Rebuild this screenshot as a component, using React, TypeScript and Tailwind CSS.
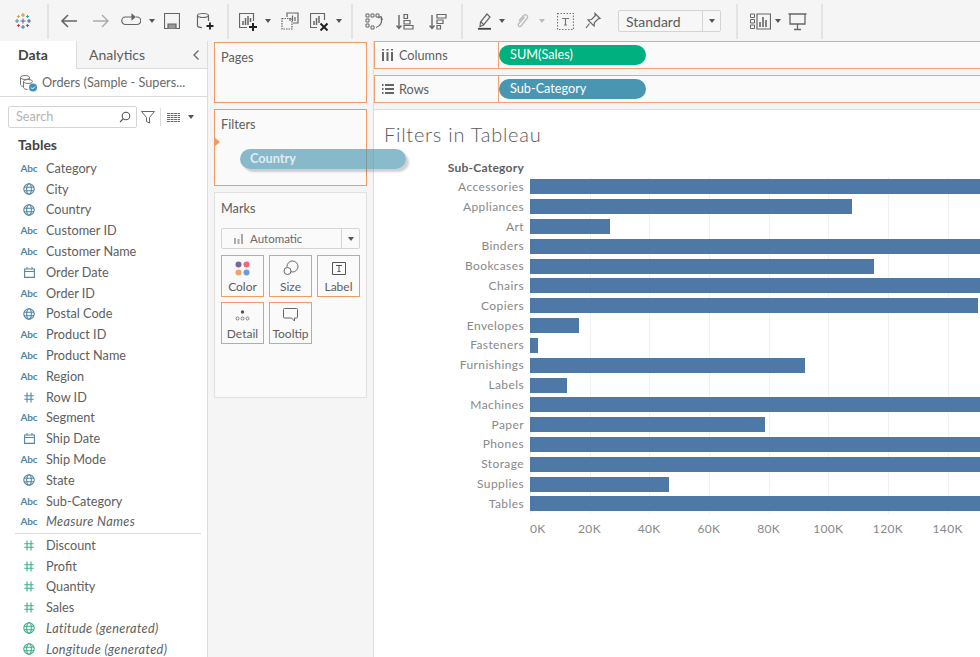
import React from "react";

type IconProps = { className?: string };

const S = ({ className, w = 18, h = 18, vb = "0 0 18 18", children, stroke = "#666" }: { className?: string; w?: number; h?: number; vb?: string; children: React.ReactNode; stroke?: string }) => (
  <svg width={w} height={h} viewBox={vb} fill="none" stroke={stroke} strokeWidth={1.2} className={`shrink-0 ${className ?? ""}`}>
    {children}
  </svg>
);

const Caret = ({ className, color = "#555" }: { className?: string; color?: string }) => (
  <svg width={6} height={4} viewBox="0 0 6 4" className={`shrink-0 ${className ?? ""}`}><path d="M0 0h6L3 4z" fill={color} /></svg>
);

const Sep = ({ className }: IconProps) => <div className={`w-[2px] h-[35px] bg-[#e3e3e3] shrink-0 ${className ?? ""}`} />;

const Logo = ({ className }: IconProps) => {
  const plus = (x: number, y: number, r: number, c: string) => (
    <path key={`${x}-${y}`} d={`M${x - r} ${y}h${2 * r}M${x} ${y - r}v${2 * r}`} stroke={c} strokeWidth={1.1} />
  );
  return (
    <svg width={18} height={18} viewBox="0 0 18 18" fill="none" className={`shrink-0 ${className ?? ""}`}>
      {plus(9, 9, 2.6, "#5b6f9a")}
      {plus(9, 3, 2, "#e8883a")}
      {plus(9, 15, 2, "#4a77a8")}
      {plus(3, 9, 2, "#3d9aa8")}
      {plus(15, 9, 2, "#5b5f97")}
      {plus(4.5, 4.5, 1.6, "#d9a53c")}
      {plus(13.5, 4.5, 1.6, "#3f9f9a")}
      {plus(4.5, 13.5, 1.6, "#d8404f")}
      {plus(13.5, 13.5, 1.6, "#4d6fa8")}
    </svg>
  );
};

const Toolbar = () => (
  <div className="h-[41px] bg-[#f5f5f5] flex items-center shrink-0 pt-[1px]">
    <Logo className="ml-[14px]" />
    <Sep className="ml-[15px]" />
    <S className="ml-[11px]"><path d="M17 9H2M8 3L2 9l6 6" strokeWidth={1.6} /></S>
    <S className="ml-[14px]" stroke="#aaa"><path d="M1 9h15M10 3l6 6-6 6" strokeWidth={1.4} /></S>
    <S className="ml-[11px]" w={20} vb="0 0 20 18"><path d="M11 5H4.500a3 3 0 000 7.500H16a3 3 0 000-7.500h-1" /><path d="M11 2.500L14 5l-3 2.500z" fill="#666" /></S>
    <Caret className="ml-[8px]" />
    <S className="ml-[9px]" w={16} vb="0 0 16 18"><path d="M.5 1.500h15v15H.5z" /><path d="M4 16.500V12h8v4.500" fill="#999" /></S>
    <S className="ml-[16px]"><ellipse cx="7" cy="3.500" rx="5.500" ry="2" /><path d="M1.500 3.500v10c0 1.200 2 2 4.500 2M12.500 3.500V9" /><path d="M14 10.500v7M10.500 14h7" stroke="#222" strokeWidth={1.8} /></S>
    <Sep className="ml-[13px]" />
    <S className="ml-[10px]" w={19} h={19} vb="0 0 19 19"><path d="M14.500 9V1.500h-14v14H8" /><path d="M4 13V9M6.500 13V6M9 13V4M11.500 10V6" strokeWidth={1.5} /><path d="M14 11v8M10 15h8" stroke="#222" strokeWidth={2} /></S>
    <Caret className="ml-[7px]" />
    <S className="ml-[10px]"><path d="M6 5V1h11v10h-5" /><path d="M1 6.500h10V17H1z" strokeDasharray="1.500 1" /><path d="M9 9V6M11.500 9V3.500M14 9V5" /></S>
    <S className="ml-[11px]" w={19} h={19} vb="0 0 19 19"><path d="M14.500 8V1.500h-14v14H7" /><path d="M4 13V9M6.500 13V6M9 11V4" strokeWidth={1.5} /><path d="M10.500 11.500l7 7M17.500 11.500l-7 7" stroke="#222" strokeWidth={2} /></S>
    <Caret className="ml-[7px]" />
    <Sep className="ml-[9px]" />
    <S className="ml-[12px]"><path d="M1 2h3v3H1zM6 2h3v3H6zM11 2h3v3h-3zM1 7h3v3H1zM1 12h3v3H1zM6 14h3v3H6z" strokeWidth={1} /><path d="M16 6c1.500 4-.5 8-5 9.500M13 6l3-1.500L17.500 8" /></S>
    <S className="ml-[13px]"><path d="M3 3v13M.5 13.500L3 16.500l2.500-3" strokeWidth={1.4} /><path d="M8 2.500h3.500v4H8zM8 8.500h6v3.500H8zM8 13.500h9v3.500H8z" /></S>
    <S className="ml-[15px]"><path d="M3 3v13M.5 13.500L3 16.500l2.500-3" strokeWidth={1.4} /><path d="M8 2.500h9V6H8zM8 8h6v3.500H8zM8 13.500h3.500V17H8z" /></S>
    <Sep className="ml-[14px]" />
    <S className="ml-[13px]"><path d="M11 2l3 3-6.500 8-3.500 1.500L4.500 10z" /><path d="M5 10l3 3" /><path d="M2 16.800h13" stroke="#444" strokeWidth={1.8} /></S>
    <Caret className="ml-[5px]" />
    <S className="ml-[9px]" stroke="#bbb"><path d="M5 9l5-6a2.500 2.500 0 013.500 3l-6.500 8a1.500 1.500 0 01-2.500-2l6-7" strokeWidth={1.3} /></S>
    <Caret className="ml-[7px]" color="#bbb" />
    <S className="ml-[12px]" w={17} h={17} vb="0 0 17 17" stroke="#777"><path d="M.5.500h16v16H.5z" strokeDasharray="1.500 1.500" /><path d="M5 5.500h7M8.500 5.500V12M7 12h3" /></S>
    <S className="ml-[10px]"><path d="M11 1.500l5 5-2 .5-3.500 3.500-.5 3.500-6-6 3.500-.5L11 4z" /><path d="M5.500 11.500L2 16" /></S>
    <div className="ml-[16px] w-[103px] h-[22px] border border-[#d4d4d4] rounded-[2px] flex items-center shrink-0 bg-[#f7f7f7]">
      <span className="pl-[7px] flex-1 text-[14px] text-[#5c5c5c]">Standard</span>
      <div className="w-[18px] h-full border-l border-[#d4d4d4] flex items-center justify-center"><Caret color="#555" /></div>
    </div>
    <Sep className="ml-[15px]" />
    <S className="ml-[12px]" w={21} h={17} vb="0 0 21 17" ><path d="M.5 1h4v3.500h-4zM.5 6.500h4V10h-4zM.5 12h4v3.500h-4z" strokeWidth={1} /><path d="M7 1h13.500v15H7z" /><path d="M10 14V9M13 14V4M16 14V7" strokeWidth={1.6} /></S>
    <Caret className="ml-[4px]" />
    <S className="ml-[7px]" w={19} h={19} vb="0 0 19 19"><path d="M.5 2h18M2 2v10h15V2M9.500 12v5M6 17.500h7" strokeWidth={1.3} /></S>
    <Sep className="ml-[14px]" />
  </div>
);

const Abc = () => <span className="text-[10px] font-bold text-[#4f86a3] tracking-[-0.2px]">Abc</span>;
const Globe = ({ color }: { color: string }) => (
  <svg width={12} height={12} viewBox="0 0 12 12" fill="none" stroke={color} strokeWidth={1.1}>
    <circle cx="6" cy="6" r="5.200" />
    <ellipse cx="6" cy="6" rx="2.300" ry="5.200" />
    <path d="M1 4.200h10M1 7.800h10" />
  </svg>
);
const Cal = () => (
  <svg width={11} height={11} viewBox="0 0 11 11" fill="none" stroke="#4f86a3" strokeWidth={1.1}>
    <path d="M.6 2h9.800v8.400H.6zM.6 4.500h9.800M3 0v2.500M8 0v2.500" />
  </svg>
);
const Hash = ({ color }: { color: string }) => (
  <svg width={10} height={11} viewBox="0 0 10 11" fill="none" stroke={color} strokeWidth={1.1}>
    <path d="M3 .5v10M7 .5v10M.3 3.700h9.400M.3 7.300h9.400" />
  </svg>
);

type Field = [string, React.ReactNode, boolean?];
const dims: Field[] = [
  ["Category", <Abc />], ["City", <Globe color="#4f86a3" />], ["Country", <Globe color="#4f86a3" />],
  ["Customer ID", <Abc />], ["Customer Name", <Abc />], ["Order Date", <Cal />], ["Order ID", <Abc />],
  ["Postal Code", <Globe color="#4f86a3" />], ["Product ID", <Abc />], ["Product Name", <Abc />],
  ["Region", <Abc />], ["Row ID", <Hash color="#4f86a3" />], ["Segment", <Abc />], ["Ship Date", <Cal />],
  ["Ship Mode", <Abc />], ["State", <Globe color="#4f86a3" />], ["Sub-Category", <Abc />], ["Measure Names", <Abc />, true],
];
const meas: Field[] = [
  ["Discount", <Hash color="#3fae85" />], ["Profit", <Hash color="#3fae85" />], ["Quantity", <Hash color="#3fae85" />],
  ["Sales", <Hash color="#3fae85" />], ["Latitude (generated)", <Globe color="#3fae85" />, true], ["Longitude (generated)", <Globe color="#3fae85" />, true],
];

const FieldRow = ({ f }: { f: Field }) => (
  <div className="h-[20.8px] flex items-center shrink-0">
    <div className="w-[46px] pl-[20px] pr-[8px] flex justify-center shrink-0">{f[1]}</div>
    <span className={`text-[12.7px] text-[#5e5e5e] whitespace-nowrap ${f[2] ? "italic tracking-[0.35px]" : ""}`}>{f[0]}</span>
  </div>
);

const DataPane = () => (
  <div className="w-[208px] shrink-0 border-r border-[#dcdcdc] flex flex-col overflow-hidden bg-white">
    <div className="h-[28px] flex shrink-0">
      <div className="w-[76px] pl-[18px] pt-[3px] text-[14px] font-bold text-[#444]">Data</div>
      <div className="flex-1 bg-[#f5f5f5] border-l border-b border-[#dcdcdc] flex items-center justify-between pl-[12px] pr-[7px]">
        <span className="text-[14px] text-[#5c5c5c]">Analytics</span>
        <svg width={8} height={12} viewBox="0 0 8 12" fill="none" stroke="#666" strokeWidth={1.3}><path d="M6.500 1.500L2 6l4.500 4.500" /></svg>
      </div>
    </div>
    <div className="h-[28px] border-b border-[#dcdcdc] flex items-center pl-[19px] shrink-0">
      <svg width={19} height={18} viewBox="0 0 19 18" fill="none" stroke="#777" strokeWidth={1}>
        <ellipse cx="6" cy="3.500" rx="4.500" ry="2" />
        <path d="M1.500 3.500v7c0 1 1.500 1.800 3 2M10.500 3.500v3" />
        <ellipse cx="9" cy="7.500" rx="4.500" ry="2" fill="#fff" />
        <path d="M4.500 7.500v6c0 1 2 2 4 2" />
        <circle cx="14" cy="13.500" r="4" fill="#3f8fc0" stroke="none" />
        <path d="M12 13.500l1.500 1.500 2.500-2.500" stroke="#fff" />
      </svg>
      <span className="ml-[4px] text-[12.7px] text-[#6a6a6a] whitespace-nowrap">Orders (Sample - Supers...</span>
    </div>
    <div className="flex items-center pl-[8px] pt-[9px] shrink-0">
      <div className="w-[129px] h-[22px] border border-[#d4d4d4] rounded-[2px] flex items-center justify-between pl-[7px] pr-[5px]">
        <span className="text-[12.7px] text-[#b4b4b4]">Search</span>
        <svg width={12} height={12} viewBox="0 0 12 12" fill="none" stroke="#555" strokeWidth={1.1}><circle cx="7" cy="5" r="3.800" /><path d="M4.300 7.700L1 11" /></svg>
      </div>
      <svg width={14} height={13} viewBox="0 0 14 13" fill="none" stroke="#666" strokeWidth={1} className="ml-[4px]"><path d="M.5.500h13L8.500 6.500V12l-3-1.500v-4z" /></svg>
      <div className="w-[1px] h-[18px] bg-[#ddd] ml-[5px]" />
      <svg width={13} height={9} viewBox="0 0 13 9" stroke="#666" strokeWidth={1} className="ml-[6px]"><path d="M0 .5h13M0 2.500h13M0 4.500h13M0 6.500h13M0 8.500h13" strokeDasharray="3 .6" /></svg>
      <Caret className="ml-[8px]" />
    </div>
    <div className="pl-[18px] pt-[6px] h-[30px] text-[14px] font-bold text-[#444] shrink-0">Tables</div>
    <div className="flex flex-col shrink-0">
      {dims.map((f) => <FieldRow key={f[0]} f={f} />)}
    </div>
    <div className="ml-[15px] mr-[6px] border-t border-[#dcdcdc] mt-[0.5px] pt-[1px] flex flex-col">
      {meas.map((f) => <div key={f[0]} className="-ml-[15px]"><FieldRow f={f} /></div>)}
    </div>
  </div>
);

const CardTitle = ({ children, className }: { children: React.ReactNode; className?: string }) => (
  <div className={`text-[12.7px] text-[#5e5e5e] pl-[6px] leading-[18px] ${className ?? "pt-[5px]"}`}>{children}</div>
);

const MarkBtn = ({ label, children }: { label: string; children: React.ReactNode }) => (
  <div className="h-[42px] border border-[#f19a63] flex flex-col items-center justify-end pb-[1px] bg-[#fafafa]">
    <div className="h-[20px] flex items-center justify-center">{children}</div>
    <span className="text-[12px] leading-[17px] text-[#5e5e5e]">{label}</span>
  </div>
);

const Shelves = () => (
  <div className="w-[165px] shrink-0 bg-[#f5f5f5] flex flex-col pl-[6px] pr-[6px] pt-[1px]">
    <div className="h-[61px] border border-[#f19a63] bg-[#fafafa] shrink-0"><CardTitle>Pages</CardTitle></div>
    <div className="h-[77px] mt-[6px] border border-[#f19a63] bg-[#fafafa] shrink-0 relative">
      <CardTitle>Filters</CardTitle>
      <div className="absolute -left-[1px] top-[27px] w-0 h-0 border-y-[5px] border-y-transparent border-l-[6px] border-l-[#f19a63]" />
    </div>
    <div className="h-[206px] mt-[6px] border border-[#e0e0e0] bg-[#fafafa] shrink-0">
      <CardTitle className="pt-[6px]">Marks</CardTitle>
      <div className="mx-[6px] mt-[11px] h-[21px] border border-[#d4d4d4] rounded-[2px] flex items-center">
        <svg width={10} height={10} viewBox="0 0 10 10" className="ml-[12px]" fill="#aaa"><path d="M0 4h2v6H0zM3.500 5h2v5h-2zM7 0h2v10H7z" /></svg>
        <span className="ml-[6px] flex-1 text-[11.500px] text-[#6a6a6a]">Automatic</span>
        <div className="w-[18px] h-full border-l border-[#d4d4d4] flex items-center justify-center"><Caret /></div>
      </div>
      <div className="mx-[6px] mt-[6px] grid grid-cols-[43px_43px_43px] gap-x-[5px] gap-y-[5px]">
        <MarkBtn label="Color">
          <svg width={15} height={15} viewBox="0 0 15 15"><circle cx="3.500" cy="3.500" r="3" fill="#7b6595" /><circle cx="11.500" cy="3.500" r="3" fill="#e96a7c" /><circle cx="3.500" cy="11.500" r="3" fill="#f0a36a" /><circle cx="11.500" cy="11.500" r="3" fill="#6f9bd1" /></svg>
        </MarkBtn>
        <MarkBtn label="Size">
          <svg width={16} height={16} viewBox="0 0 16 16" fill="none" stroke="#666"><circle cx="9.500" cy="6.500" r="5.500" /><circle cx="4.500" cy="11" r="3.500" fill="#fafafa" /></svg>
        </MarkBtn>
        <MarkBtn label="Label">
          <svg width={14} height={13} viewBox="0 0 14 13" fill="none" stroke="#555"><path d="M.5.500h13v12H.5z" /><path d="M4 3.500h6M7 3.500V9.500M5.500 9.500h3" /></svg>
        </MarkBtn>
        <MarkBtn label="Detail">
          <svg width={15} height={11} viewBox="0 0 15 11" fill="none" stroke="#666" strokeWidth={0.8}><circle cx="7.500" cy="2" r="1.700" fill="#555" stroke="none" /><circle cx="2.500" cy="8.500" r="1.500" /><circle cx="7.500" cy="8.500" r="1.500" /><circle cx="12.500" cy="8.500" r="1.500" /></svg>
        </MarkBtn>
        <MarkBtn label="Tooltip">
          <svg width={15} height={14} viewBox="0 0 15 14" fill="none" stroke="#666"><path d="M.5 1.500a1 1 0 011-1h12a1 1 0 011 1V9a1 1 0 01-1 1h-2V13l-3-3h-7a1 1 0 01-1-1z" /></svg>
        </MarkBtn>
      </div>
    </div>
  </div>
);

const Shelf = ({ label, icon, pill, pillClass, className, textClass }: { label: string; icon: React.ReactNode; pill: string; pillClass: string; className?: string; textClass?: string }) => (
  <div className={`h-[28px] border-y border-l border-[#f3a271] flex items-center bg-[#fafafa] shrink-0 ${className ?? ""}`}>
    <div className="w-[124px] h-full border-r border-[#f3a271] flex items-center pl-[7px] shrink-0">
      <div className="w-[17px] flex justify-start">{icon}</div>
      <span className={`text-[12.7px] text-[#5e5e5e] ${textClass ?? ""}`}>{label}</span>
    </div>
    <div className={`w-[147px] h-[20px] rounded-full text-[12.7px] text-white pl-[11px] flex items-center ${pillClass}`}>{pill}</div>
  </div>
);

const bars: [string, number][] = [
  ["Accessories", 460], ["Appliances", 322], ["Art", 80], ["Binders", 460], ["Bookcases", 344], ["Chairs", 460],
  ["Copiers", 448], ["Envelopes", 49], ["Fasteners", 8], ["Furnishings", 275], ["Labels", 37], ["Machines", 460],
  ["Paper", 235], ["Phones", 460], ["Storage", 460], ["Supplies", 139], ["Tables", 460],
];
const ticks = ["0K", "20K", "40K", "60K", "80K", "100K", "120K", "140K"];

const Chart = () => (
  <div className="flex flex-col">
    <div className="flex h-[19px] items-center">
      <div className="w-[143px] text-right text-[12px] font-bold text-[#5e5e5e] tracking-[0.25px]">Sub-Category</div>
    </div>
    <div className="relative">
      <div className="absolute left-[149px] top-0 bottom-0 flex">
        {[0, 1, 2, 3, 4, 5, 6, 7].map((t) => (
          <div key={t} className="w-[59.700px] h-full border-l border-[#f0f0f0]" />
        ))}
      </div>
      {bars.map(([n, w]) => (
        <div key={n} className="h-[19.820px] flex items-center relative">
          <div className="w-[143px] text-right text-[12px] tracking-[0.4px] text-[#888] whitespace-nowrap">{n}</div>
          <div className="ml-[6px] h-[15px] bg-[#4e79a7]" style={{ width: w }} />
        </div>
      ))}
    </div>
    <div className="flex ml-[119px] mt-[6px] text-[12px] tracking-[0.35px] text-[#888]">
      {ticks.map((t, i) => (
        <div key={t} className={`w-[59.700px] text-center ${i === 0 ? "pl-[16px]" : ""}`}>{t}</div>
      ))}
    </div>
  </div>
);

export default function App() {
  return (
    <div className="w-[980px] h-[657px] overflow-hidden flex flex-col relative bg-white font-['Lato','Liberation_Sans',sans-serif]">
      <Toolbar />
      <div className="flex flex-1 min-h-0">
        <DataPane />
        <Shelves />
        <div className="flex-1 min-w-0 flex flex-col bg-[#f5f5f5] border-l border-[#dcdcdc]">
          <Shelf
            label="Columns"
            pill="SUM(Sales)"
            pillClass="bg-[#00b180]"
            icon={<svg width={11} height={12} viewBox="0 0 11 12" fill="#666"><path d="M0 3h2v9H0zM4.500 3h2v9h-2zM9 3h2v9H9zM0 0h2v1.500H0zM4.500 0h2v1.500h-2zM9 0h2v1.500H9z" /></svg>}
            textClass="pt-[1px]"
          />
          <Shelf
            label="Rows"
            pill="Sub-Category"
            pillClass="bg-[#4996b2]"
            className="mt-[6px]"
            textClass="pt-[1px]"
            icon={<svg width={12} height={10} viewBox="0 0 12 10" fill="#666"><path d="M0 0h1.500v2H0zM3 0h9v2H3zM0 4h1.500v2H0zM3 4h9v2H3zM0 8h1.500v2H0zM3 8h9v2H3z" /></svg>}
          />
          <div className="flex-1 mt-[6px] bg-white border-t border-[#dcdcdc] pl-[10px] pt-[11px] overflow-hidden">
            <div className="text-[20px] leading-[26px] font-light text-[#5a5a5a] tracking-[0.75px]">Filters in Tableau</div>
            <div className="mt-[11px] ml-[-3px] w-[700px]"><Chart /></div>
          </div>
        </div>
      </div>
      <div className="absolute left-[240px] top-[149px] w-[166px] h-[20px] rounded-full bg-[#4996b2]/65 shadow-[3px_3px_2px_rgba(0,0,0,0.18)] text-[12.7px] font-bold text-white/75 pl-[10px] flex items-center">Country</div>
    </div>
  );
}
